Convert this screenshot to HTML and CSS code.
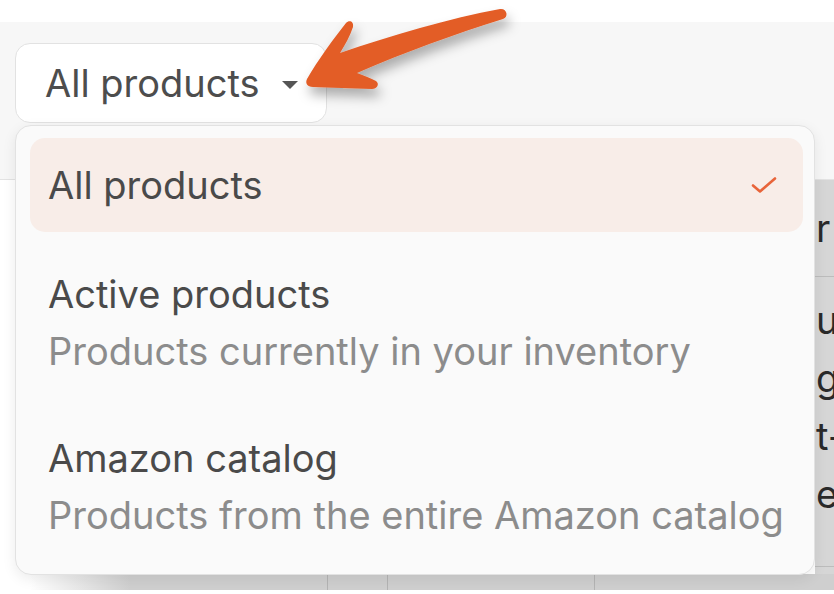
FILE: index.html
```html
<!DOCTYPE html>
<html>
<head>
<meta charset="utf-8">
<link rel="stylesheet" href="styles.css">
</head>
<body>
<div class="page">
  <div class="topstrip"></div>
  <div class="toolbar">
    <button class="select">
      <span class="select-label">All products</span>
      <span class="caret"></span>
    </button>
  </div>
  <div class="table">
    <div class="table-main"></div>
    <div class="table-side">
      <div class="side-row head"><span class="frag">r</span></div>
      <div class="side-row body">
        <span class="frag">u</span>
        <span class="frag">g</span>
        <span class="frag">t-</span>
        <span class="frag">e</span>
      </div>
    </div>
  </div>
  <div class="bottomstrip">
    <span class="vline l1"></span>
    <span class="vline l2"></span>
    <span class="vline l3"></span>
  </div>

  <div class="menu">
    <div class="item selected">
      <div class="item-title">All products</div>
      <svg class="check" viewBox="0 0 26 18" width="26" height="18"><path d="M2 9.5 L9 15.5 L24 2.5" fill="none" stroke="#e8643a" stroke-width="2.6" stroke-linecap="round" stroke-linejoin="round"/></svg>
    </div>
    <div class="item second">
      <div class="item-title">Active products</div>
      <div class="item-desc">Products currently in your inventory</div>
    </div>
    <div class="item third">
      <div class="item-title">Amazon catalog</div>
      <div class="item-desc">Products from the entire Amazon catalog</div>
    </div>
  </div>

  <svg class="arrow" viewBox="0 0 834 120" width="834" height="120">
    <defs>
      <filter id="sh" x="-20%" y="-40%" width="140%" height="180%">
        <feDropShadow dx="3" dy="8" stdDeviation="6" flood-color="#000" flood-opacity="0.3"/>
      </filter>
    </defs>
    <path filter="url(#sh)" fill="#e35d27" d="M307 79 C318 60 334 38 346 23 C349 20 354 21 353 27 C350 36 345 45 340 53 C390 36 450 18 500 9 C507 8 509 17 503 19 C455 34 405 52 357 73 C364 76 371 78 376 81 C380 84 377 89 372 89 C352 88 331 88 313 87 C307 87 305 83 307 79 Z"/>
  </svg>
</div>
</body>
</html>
```
FILE: styles.css
```css
html, body {
  margin: 0;
  padding: 0;
  background: #ffffff;
}
.page {
  position: relative;
  width: 834px;
  height: 594px;
  overflow: hidden;
  font-family: Inter, "Noto Sans", "Liberation Sans", sans-serif;
}
.topstrip {
  height: 22px;
  background: #ffffff;
}
.toolbar {
  height: 158px;
  box-sizing: border-box;
  background: #f7f7f7;
  border-bottom: 1px solid #e3e3e3;
  padding: 21px 0 0 15px;
}
.select {
  display: flex;
  align-items: center;
  gap: 22px;
  width: 312px;
  height: 80px;
  box-sizing: border-box;
  padding: 0 0 0 29px;
  background: #ffffff;
  border: 1.5px solid #e2e2e2;
  border-radius: 15px;
  font-family: inherit;
  cursor: pointer;
}
.select-label {
  font-size: 38px;
  color: #4d4d4d;
}
.caret {
  width: 0;
  height: 0;
  border-left: 8px solid transparent;
  border-right: 8px solid transparent;
  border-top: 8px solid #555555;
  margin-top: 4px;
}
.table {
  display: flex;
  height: 394px;
}
.table-main {
  flex: 1;
  background: #ffffff;
}
.table-side {
  width: 19px;
  background: #d6d6d6;
  display: flex;
  flex-direction: column;
  overflow: hidden;
}
.side-row {
  border-bottom: 1px solid #bcbcbc;
  display: flex;
  flex-direction: column;
  font-size: 38px;
  color: #2a2a2a;
}
.side-row.head {
  height: 96px;
  justify-content: center;
  padding-left: 1px;
}
.side-row.head .frag {
  line-height: 40px;
}
.side-row.body {
  height: 290px;
  padding-top: 14px;
  box-sizing: border-box;
  padding-left: 1px;
}
.frag {
  line-height: 58px;
  white-space: nowrap;
}
.bottomstrip {
  position: relative;
  height: 16px;
  background: linear-gradient(90deg, #ffffff 0px, #ffffff 30px, #cfcfcf 130px, #cfcfcf 100%);
}
.vline {
  position: absolute;
  top: 0;
  bottom: 0;
  width: 1px;
  background: #b4b4b4;
}
.vline.l1 { left: 327px; }
.vline.l2 { left: 387px; }
.vline.l3 { left: 594px; }

.menu {
  position: absolute;
  left: 15px;
  top: 125px;
  width: 800px;
  height: 450px;
  box-sizing: border-box;
  background: #fafafa;
  border: 1.5px solid #e2e2e2;
  border-radius: 16px;
  padding: 12px 11px 0 14px;
  display: flex;
  flex-direction: column;
  box-shadow: 0 4px 14px rgba(0, 0, 0, 0.08);
}
.item {
  padding: 0 0 0 18px;
  border-radius: 15px;
  display: flex;
  flex-direction: column;
  justify-content: center;
}
.item.selected {
  position: relative;
  height: 94px;
  background: #f8ede8;
  margin-bottom: 26px;
}
.item.second {
  height: 130px;
  margin-bottom: 34px;
}
.item.third {
  height: 130px;
}
.item-title {
  font-size: 38px;
  color: #4a4a4a;
  line-height: 57px;
}
.item-desc {
  font-size: 38px;
  color: #8c8c8c;
  line-height: 57px;
}
.check {
  position: absolute;
  right: 26px;
  top: 38px;
}
.arrow {
  position: absolute;
  left: 0;
  top: 0;
}
```
